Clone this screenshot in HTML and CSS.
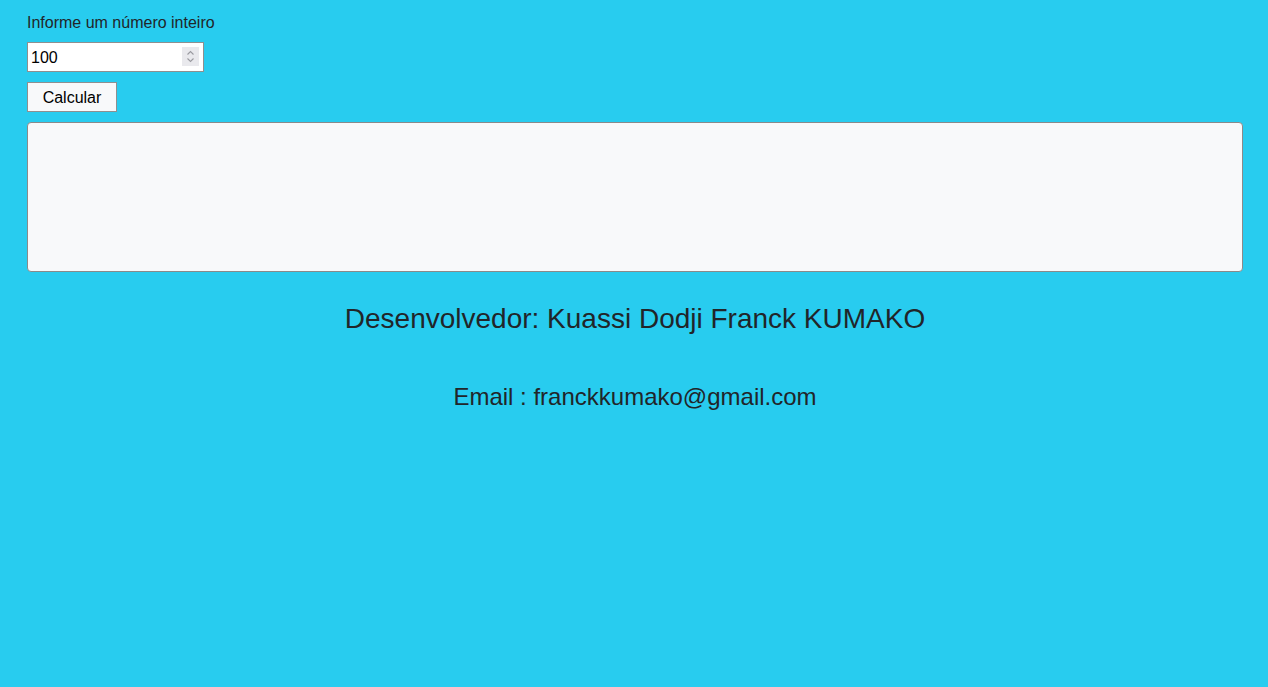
FILE: index.html
```html
<!DOCTYPE html>
<html lang="pt">
<head>
<meta charset="utf-8">
<title>Calcular</title>
<link rel="stylesheet" href="styles.css">
</head>
<body>
<main class="page">
  <label class="label" for="num">Informe um número inteiro</label>
  <div class="num-wrap">
    <input class="num-input" id="num" type="text" inputmode="numeric" value="100">
    <span class="spinner" aria-hidden="true">
      <svg width="17" height="19" viewBox="0 0 17 19">
        <path d="M5.5 7.5 L8.5 4.5 L11.5 7.5" fill="none" stroke="#9a9aa0" stroke-width="1.1"/>
        <path d="M5.5 11.5 L8.5 14.5 L11.5 11.5" fill="none" stroke="#9a9aa0" stroke-width="1.1"/>
      </svg>
    </span>
  </div>
  <button class="btn" type="button">Calcular</button>
  <textarea class="result"></textarea>
  <h2 class="dev">Desenvolvedor: Kuassi Dodji Franck KUMAKO</h2>
  <h3 class="email">Email : franckkumako@gmail.com</h3>
</main>
</body>
</html>
```
FILE: styles.css
```css
html, body {
  margin: 0;
  padding: 0;
}
body {
  background: #28ccef;
  color: #212529;
  font-family: "Liberation Sans", Arial, sans-serif;
  min-height: 687px;
}
.page {
  display: flex;
  flex-direction: column;
  align-items: flex-start;
  padding: 0 25px 0 27px;
}
.label {
  font-size: 16px;
  line-height: 20px;
  margin-top: 13px;
  margin-bottom: 9px;
}
.num-wrap {
  position: relative;
  width: 177px;
  height: 30px;
  margin: 0 0 10px;
}
.num-input {
  box-sizing: border-box;
  width: 177px;
  height: 30px;
  font-family: "Liberation Sans", Arial, sans-serif;
  font-size: 16px;
  color: #000;
  border: 1px solid #8f8f8f;
  padding: 2px 3px 0;
  margin: 0;
  background: #fff;
  outline: none;
}
.spinner {
  position: absolute;
  top: 5px;
  left: 155px;
  width: 17px;
  height: 19px;
  background: #e9e9ed;
  display: flex;
}
.btn {
  box-sizing: border-box;
  width: 90px;
  height: 30px;
  font-family: "Liberation Sans", Arial, sans-serif;
  font-size: 16px;
  color: #000;
  background: #f8f9fa;
  border: 1px solid #8f8f8f;
  margin: 0 0 10px;
  padding: 2px 0 0;
}
.result {
  box-sizing: border-box;
  align-self: stretch;
  height: 150px;
  background: #f8f9fa;
  border: 1px solid #8a8a8a;
  border-radius: 4px;
  margin: 0;
  resize: none;
}
.dev {
  align-self: stretch;
  text-align: center;
  font-weight: normal;
  font-size: 28px;
  line-height: 32px;
  margin: 31px 0 0;
}
.email {
  align-self: stretch;
  text-align: center;
  font-weight: normal;
  font-size: 24px;
  line-height: 28px;
  margin: 48px 0 0;
}
```
